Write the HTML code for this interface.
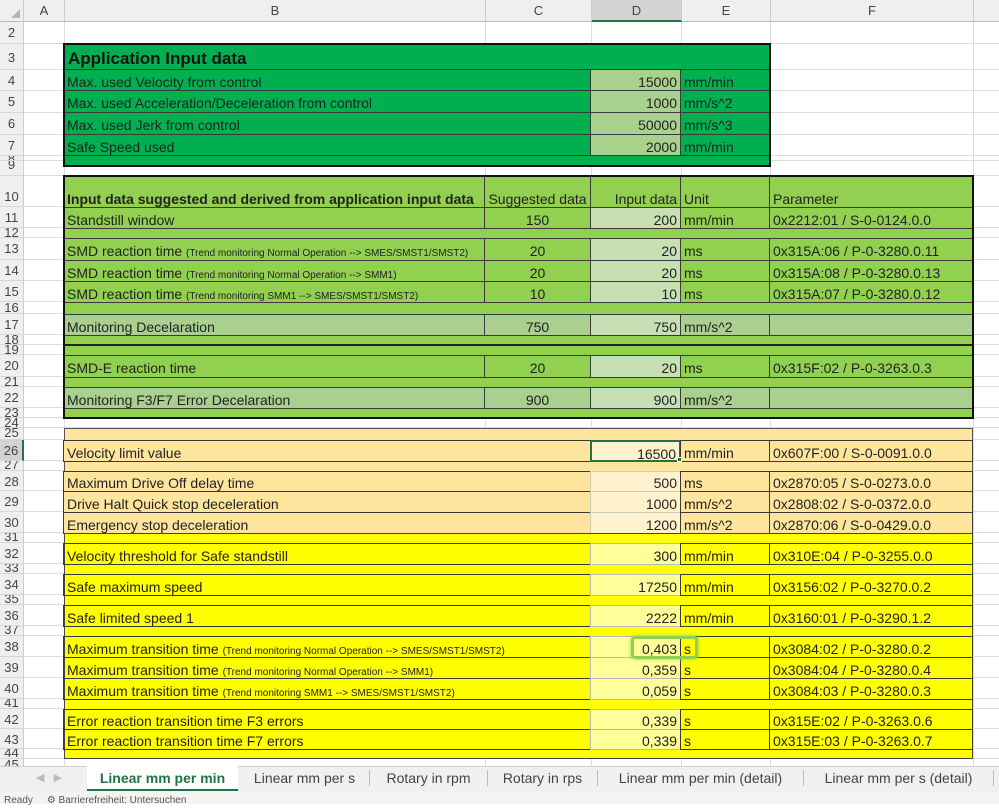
<!DOCTYPE html><html><head><meta charset="utf-8"><style>
*{margin:0;padding:0;box-sizing:border-box}
body{width:999px;height:804px;overflow:hidden;background:#fff;font-family:"Liberation Sans",sans-serif;position:relative;color:#1a1a1a}
.a{position:absolute}
.hl{position:absolute;left:0;width:999px;height:1px;background:#dcdcdc}
.vl{position:absolute;top:22px;width:1px;height:746px;background:#dcdcdc}
.rh{position:absolute;left:0;width:24px;background:#efefef;border-right:1px solid #ccc;border-bottom:1px solid #d6d6d6;font-size:13px;color:#444;text-align:center;overflow:hidden}
.ch{position:absolute;top:0;height:22px;line-height:22px;background:#efefef;border-right:1px solid #ccc;border-bottom:1px solid #bbb;font-size:13px;color:#444;text-align:center}
.r{position:absolute;left:64px;width:909px}
.r>div{position:absolute;top:0;height:100%;white-space:nowrap;overflow:hidden;padding:1px 3px 0;font-size:14px;border:1px solid #3a3a3a;margin-left:-1px;color:#222}
.B{left:0;width:422px}.C{left:421px;width:107px;text-align:center}.D{left:527px;width:91px;text-align:right}.E{left:617px;width:90px}.F{left:706px;width:204px}
.bk{position:absolute;border:2px solid #111}
small{font-size:10px}
</style></head><body>
<div class="vl" style="left:64px"></div><div class="vl" style="left:485px"></div><div class="vl" style="left:591px"></div><div class="vl" style="left:681px"></div><div class="vl" style="left:770px"></div><div class="vl" style="left:973px"></div>
<div class="hl" style="top:43px"></div><div class="hl" style="top:69px"></div><div class="hl" style="top:90px"></div><div class="hl" style="top:112px"></div><div class="hl" style="top:134px"></div><div class="hl" style="top:155px"></div><div class="hl" style="top:160px"></div><div class="hl" style="top:175px"></div><div class="hl" style="top:206px"></div><div class="hl" style="top:227px"></div><div class="hl" style="top:237px"></div><div class="hl" style="top:259px"></div><div class="hl" style="top:280px"></div><div class="hl" style="top:301px"></div><div class="hl" style="top:313px"></div><div class="hl" style="top:334px"></div><div class="hl" style="top:344px"></div><div class="hl" style="top:354px"></div><div class="hl" style="top:376px"></div><div class="hl" style="top:386px"></div><div class="hl" style="top:407px"></div><div class="hl" style="top:417px"></div><div class="hl" style="top:427px"></div><div class="hl" style="top:439px"></div><div class="hl" style="top:460px"></div><div class="hl" style="top:470px"></div><div class="hl" style="top:490px"></div><div class="hl" style="top:511px"></div><div class="hl" style="top:532px"></div><div class="hl" style="top:542px"></div><div class="hl" style="top:563px"></div><div class="hl" style="top:573px"></div><div class="hl" style="top:594px"></div><div class="hl" style="top:604px"></div><div class="hl" style="top:625px"></div><div class="hl" style="top:635px"></div><div class="hl" style="top:656px"></div><div class="hl" style="top:677px"></div><div class="hl" style="top:698px"></div><div class="hl" style="top:708px"></div><div class="hl" style="top:728px"></div><div class="hl" style="top:748px"></div><div class="hl" style="top:758px"></div>
<div class="ch" style="left:0;width:24px"><span style="display:inline-block;width:0;height:0;border-left:9px solid transparent;border-bottom:9px solid #b5b5b5;margin-top:9px;margin-left:8px"></span></div>
<div class="ch" style="left:24px;width:41px">A</div><div class="ch" style="left:65px;width:421px">B</div><div class="ch" style="left:486px;width:106px">C</div><div class="ch" style="left:592px;width:90px;background:#d3d3d3;border-bottom:2px solid #217346">D</div><div class="ch" style="left:682px;width:89px">E</div><div class="ch" style="left:771px;width:203px">F</div><div class="ch" style="left:974px;width:25px;border-right:none"></div>
<div class="rh" style="top:22px;height:22px;line-height:22px">2</div><div class="rh" style="top:44px;height:26px;line-height:28px">3</div><div class="rh" style="top:70px;height:21px;line-height:22px">4</div><div class="rh" style="top:91px;height:22px;line-height:22px">5</div><div class="rh" style="top:113px;height:22px;line-height:22px">6</div><div class="rh" style="top:135px;height:21px;line-height:22px">7</div><div class="rh" style="top:156px;height:5px;line-height:5px">8</div><div class="rh" style="top:161px;height:15px;line-height:8px">9</div><div class="rh" style="top:176px;height:31px;line-height:42px">10</div><div class="rh" style="top:207px;height:21px;line-height:22px">11</div><div class="rh" style="top:228px;height:10px;line-height:10px">12</div><div class="rh" style="top:238px;height:22px;line-height:22px">13</div><div class="rh" style="top:260px;height:21px;line-height:22px">14</div><div class="rh" style="top:281px;height:21px;line-height:22px">15</div><div class="rh" style="top:302px;height:12px;line-height:12px">16</div><div class="rh" style="top:314px;height:21px;line-height:22px">17</div><div class="rh" style="top:335px;height:10px;line-height:10px">18</div><div class="rh" style="top:345px;height:10px;line-height:10px">19</div><div class="rh" style="top:355px;height:22px;line-height:22px">20</div><div class="rh" style="top:377px;height:10px;line-height:10px">21</div><div class="rh" style="top:387px;height:21px;line-height:22px">22</div><div class="rh" style="top:408px;height:10px;line-height:10px">23</div><div class="rh" style="top:418px;height:10px;line-height:10px">24</div><div class="rh" style="top:428px;height:12px;line-height:10px">25</div><div class="rh" style="top:440px;height:21px;line-height:22px;background:#d3d3d3;border-right:2px solid #217346">26</div><div class="rh" style="top:461px;height:10px;line-height:8px">27</div><div class="rh" style="top:471px;height:20px;line-height:22px">28</div><div class="rh" style="top:491px;height:21px;line-height:22px">29</div><div class="rh" style="top:512px;height:21px;line-height:22px">30</div><div class="rh" style="top:533px;height:10px;line-height:8px">31</div><div class="rh" style="top:543px;height:21px;line-height:22px">32</div><div class="rh" style="top:564px;height:10px;line-height:8px">33</div><div class="rh" style="top:574px;height:21px;line-height:22px">34</div><div class="rh" style="top:595px;height:10px;line-height:8px">35</div><div class="rh" style="top:605px;height:21px;line-height:22px">36</div><div class="rh" style="top:626px;height:10px;line-height:8px">37</div><div class="rh" style="top:636px;height:21px;line-height:22px">38</div><div class="rh" style="top:657px;height:21px;line-height:22px">39</div><div class="rh" style="top:678px;height:21px;line-height:22px">40</div><div class="rh" style="top:699px;height:10px;line-height:8px">41</div><div class="rh" style="top:709px;height:20px;line-height:22px">42</div><div class="rh" style="top:729px;height:20px;line-height:22px">43</div><div class="rh" style="top:749px;height:10px;line-height:8px">44</div><div class="rh" style="top:759px;height:10px;line-height:12px">45</div>

<div class="a" style="left:64px;top:44px;width:706px;height:122px;background:#00b050"></div>
<div class="a" style="left:68px;top:45px;height:26px;line-height:28px;font-size:17px;font-weight:bold;color:#111">Application Input data</div>
<div class="r" style="top:69px;height:22px;line-height:22px;width:706px"><div class="B" style="width:528px">Max. used Velocity from control</div><div class="D" style="background:#a9d18e">15000</div><div class="E">mm/min</div></div>
<div class="r" style="top:90px;height:23px;line-height:23px;width:706px"><div class="B" style="width:528px">Max. used Acceleration/Deceleration from control</div><div class="D" style="background:#a9d18e">1000</div><div class="E">mm/s^2</div></div>
<div class="r" style="top:112px;height:23px;line-height:23px;width:706px"><div class="B" style="width:528px">Max. used Jerk from control</div><div class="D" style="background:#a9d18e">50000</div><div class="E">mm/s^3</div></div>
<div class="r" style="top:134px;height:22px;line-height:22px;width:706px"><div class="B" style="width:528px">Safe Speed used</div><div class="D" style="background:#a9d18e">2000</div><div class="E">mm/min</div></div>
<div class="bk" style="left:63px;top:43px;width:708px;height:124px"></div>

<div class="a" style="left:64px;top:176px;width:909px;height:242px;background:#92d050"></div>
<div class="r" style="top:176px;height:32px;line-height:42px"><div class="B" style="font-weight:bold">Input data suggested and derived from application input data</div><div class="C">Suggested data</div><div class="D">Input data</div><div class="E">Unit</div><div class="F">Parameter</div></div>
<div class="r" style="top:207px;height:22px;line-height:22px"><div class="B">Standstill window</div><div class="C">150</div><div class="D" style="background:#c6e0b4">200</div><div class="E">mm/min</div><div class="F">0x2212:01 / S-0-0124.0.0</div></div>
<div class="r" style="top:238px;height:23px;line-height:23px"><div class="B">SMD reaction time <small>(Trend monitoring Normal Operation --&gt; SMES/SMST1/SMST2)</small></div><div class="C">20</div><div class="D" style="background:#c6e0b4">20</div><div class="E">ms</div><div class="F">0x315A:06 / P-0-3280.0.11</div></div>
<div class="r" style="top:260px;height:22px;line-height:22px"><div class="B">SMD reaction time <small>(Trend monitoring Normal Operation --&gt; SMM1)</small></div><div class="C">20</div><div class="D" style="background:#c6e0b4">20</div><div class="E">ms</div><div class="F">0x315A:08 / P-0-3280.0.13</div></div>
<div class="r" style="top:281px;height:22px;line-height:22px"><div class="B">SMD reaction time <small>(Trend monitoring SMM1 --&gt; SMES/SMST1/SMST2)</small></div><div class="C">10</div><div class="D" style="background:#c6e0b4">10</div><div class="E">ms</div><div class="F">0x315A:07 / P-0-3280.0.12</div></div>
<div class="r" style="top:314px;height:22px;line-height:22px"><div class="B" style="background:#a9d08e">Monitoring Decelaration</div><div class="C" style="background:#a9d08e">750</div><div class="D" style="background:#c6e0b4">750</div><div class="E" style="background:#a9d08e">mm/s^2</div><div class="F" style="background:#a9d08e"></div></div>
<div class="a" style="left:64px;top:344px;width:909px;height:2px;background:#222"></div>
<div class="r" style="top:355px;height:23px;line-height:23px"><div class="B">SMD-E reaction time</div><div class="C">20</div><div class="D" style="background:#c6e0b4">20</div><div class="E">ms</div><div class="F">0x315F:02 / P-0-3263.0.3</div></div>
<div class="r" style="top:387px;height:22px;line-height:22px"><div class="B" style="background:#a9d08e">Monitoring F3/F7 Error Decelaration</div><div class="C" style="background:#a9d08e">900</div><div class="D" style="background:#c6e0b4">900</div><div class="E" style="background:#a9d08e">mm/s^2</div><div class="F" style="background:#a9d08e"></div></div>
<div class="bk" style="left:63px;top:175px;width:911px;height:244px"></div>

<div class="a" style="left:64px;top:428px;width:909px;height:105px;background:#fee59e;border:1px solid #555;border-bottom:none"></div>
<div class="r" style="top:440px;height:22px;line-height:22px"><div class="B" style="width:528px;background:#fee59e">Velocity limit value</div><div class="D" style="background:#fff2cc;border:2px solid #217346">16500</div><div class="E" style="background:#fee59e">mm/min</div><div class="F" style="background:#fee59e">0x607F:00 / S-0-0091.0.0</div></div>
<div class="a" style="left:677px;top:457px;width:5px;height:5px;background:#217346;border:1px solid #fff"></div>
<div class="r" style="top:471px;height:21px;line-height:21px"><div class="B" style="width:528px;background:#fee59e">Maximum Drive Off delay time</div><div class="D" style="background:#fff2cc;border-color:#ccb;">500</div><div class="E" style="background:#fee59e">ms</div><div class="F" style="background:#fee59e">0x2870:05 / S-0-0273.0.0</div></div>
<div class="r" style="top:491px;height:22px;line-height:22px"><div class="B" style="width:528px;background:#fee59e">Drive Halt Quick stop deceleration</div><div class="D" style="background:#fff2cc;border-color:#ccb;">1000</div><div class="E" style="background:#fee59e">mm/s^2</div><div class="F" style="background:#fee59e">0x2808:02 / S-0-0372.0.0</div></div>
<div class="r" style="top:512px;height:22px;line-height:22px"><div class="B" style="width:528px;background:#fee59e">Emergency stop deceleration</div><div class="D" style="background:#fff2cc;border-color:#ccb;">1200</div><div class="E" style="background:#fee59e">mm/s^2</div><div class="F" style="background:#fee59e">0x2870:06 / S-0-0429.0.0</div></div>

<div class="a" style="left:64px;top:533px;width:909px;height:226px;background:#ffff00;border:1px solid #444"></div>
<div class="r" style="top:543px;height:22px;line-height:22px"><div class="B" style="width:528px">Velocity threshold for Safe standstill</div><div class="D" style="background:#ffff99;border-color:#bbb">300</div><div class="E">mm/min</div><div class="F">0x310E:04 / P-0-3255.0.0</div></div>
<div class="r" style="top:574px;height:22px;line-height:22px"><div class="B" style="width:528px">Safe maximum speed</div><div class="D" style="background:#ffff99;border-color:#bbb">17250</div><div class="E">mm/min</div><div class="F">0x3156:02 / P-0-3270.0.2</div></div>
<div class="r" style="top:605px;height:22px;line-height:22px"><div class="B" style="width:528px">Safe limited speed 1</div><div class="D" style="background:#ffff99;border-color:#bbb">2222</div><div class="E">mm/min</div><div class="F">0x3160:01 / P-0-3290.1.2</div></div>
<div class="r" style="top:636px;height:22px;line-height:22px"><div class="B" style="width:528px">Maximum transition time <small>(Trend monitoring Normal Operation --&gt; SMES/SMST1/SMST2)</small></div><div class="D" style="background:#ffff99;border-color:#bbb">0,403</div><div class="E">s</div><div class="F">0x3084:02 / P-0-3280.0.2</div></div>
<div class="r" style="top:657px;height:22px;line-height:22px"><div class="B" style="width:528px">Maximum transition time <small>(Trend monitoring Normal Operation --&gt; SMM1)</small></div><div class="D" style="background:#ffff99;border-color:#bbb">0,359</div><div class="E">s</div><div class="F">0x3084:04 / P-0-3280.0.4</div></div>
<div class="r" style="top:678px;height:22px;line-height:22px"><div class="B" style="width:528px">Maximum transition time <small>(Trend monitoring SMM1 --&gt; SMES/SMST1/SMST2)</small></div><div class="D" style="background:#ffff99;border-color:#bbb">0,059</div><div class="E">s</div><div class="F">0x3084:03 / P-0-3280.0.3</div></div>
<div class="a" style="left:631px;top:636px;width:67px;height:23px;border:3px solid #8fd14f;border-radius:4px;box-shadow:0 0 4px #8fd14f"></div>
<div class="r" style="top:709px;height:21px;line-height:21px"><div class="B" style="width:528px">Error reaction transition time F3 errors</div><div class="D" style="background:#ffff99;border-color:#bbb">0,339</div><div class="E">s</div><div class="F">0x315E:02 / P-0-3263.0.6</div></div>
<div class="r" style="top:729px;height:21px;line-height:21px"><div class="B" style="width:528px">Error reaction transition time F7 errors</div><div class="D" style="background:#ffff99;border-color:#bbb">0,339</div><div class="E">s</div><div class="F">0x315E:03 / P-0-3263.0.7</div></div>

<div class="a" style="left:0;top:766px;width:999px;height:26px;background:#f0f0f0;border-top:1px solid #d0d0d0"></div>
<div class="a" style="left:36px;top:771px;font-size:11px;color:#bbb">&#9664;&nbsp;&nbsp;&nbsp;&#9654;</div>
<div class="a" style="left:87px;top:766px;width:151px;height:25px;background:#fff;border-bottom:2px solid #217346;color:#217346;font-weight:bold;font-size:14px;line-height:24px;text-align:center">Linear mm per min</div>
<div class="a" style="top:766px;left:240px;height:25px;line-height:24px;font-size:14px;color:#444;white-space:nowrap">
<span style="display:inline-block;width:130px;text-align:center;border-right:1px solid #bbb;line-height:16px">Linear mm per s</span><span style="display:inline-block;width:118px;text-align:center;border-right:1px solid #bbb;line-height:16px">Rotary in rpm</span><span style="display:inline-block;width:110px;text-align:center;border-right:1px solid #bbb;line-height:16px">Rotary in rps</span><span style="display:inline-block;width:206px;text-align:center;border-right:1px solid #bbb;line-height:16px">Linear mm per min (detail)</span><span style="display:inline-block;width:190px;text-align:center;border-right:1px solid #bbb;line-height:16px">Linear mm per s (detail)</span></div>
<div class="a" style="left:0;top:792px;width:999px;height:12px;background:#f3f3f3;font-size:10px;color:#555;padding-left:4px;line-height:18px">Ready &nbsp;&nbsp;&nbsp; &#9881; Barrierefreiheit: Untersuchen</div>
</body></html>
